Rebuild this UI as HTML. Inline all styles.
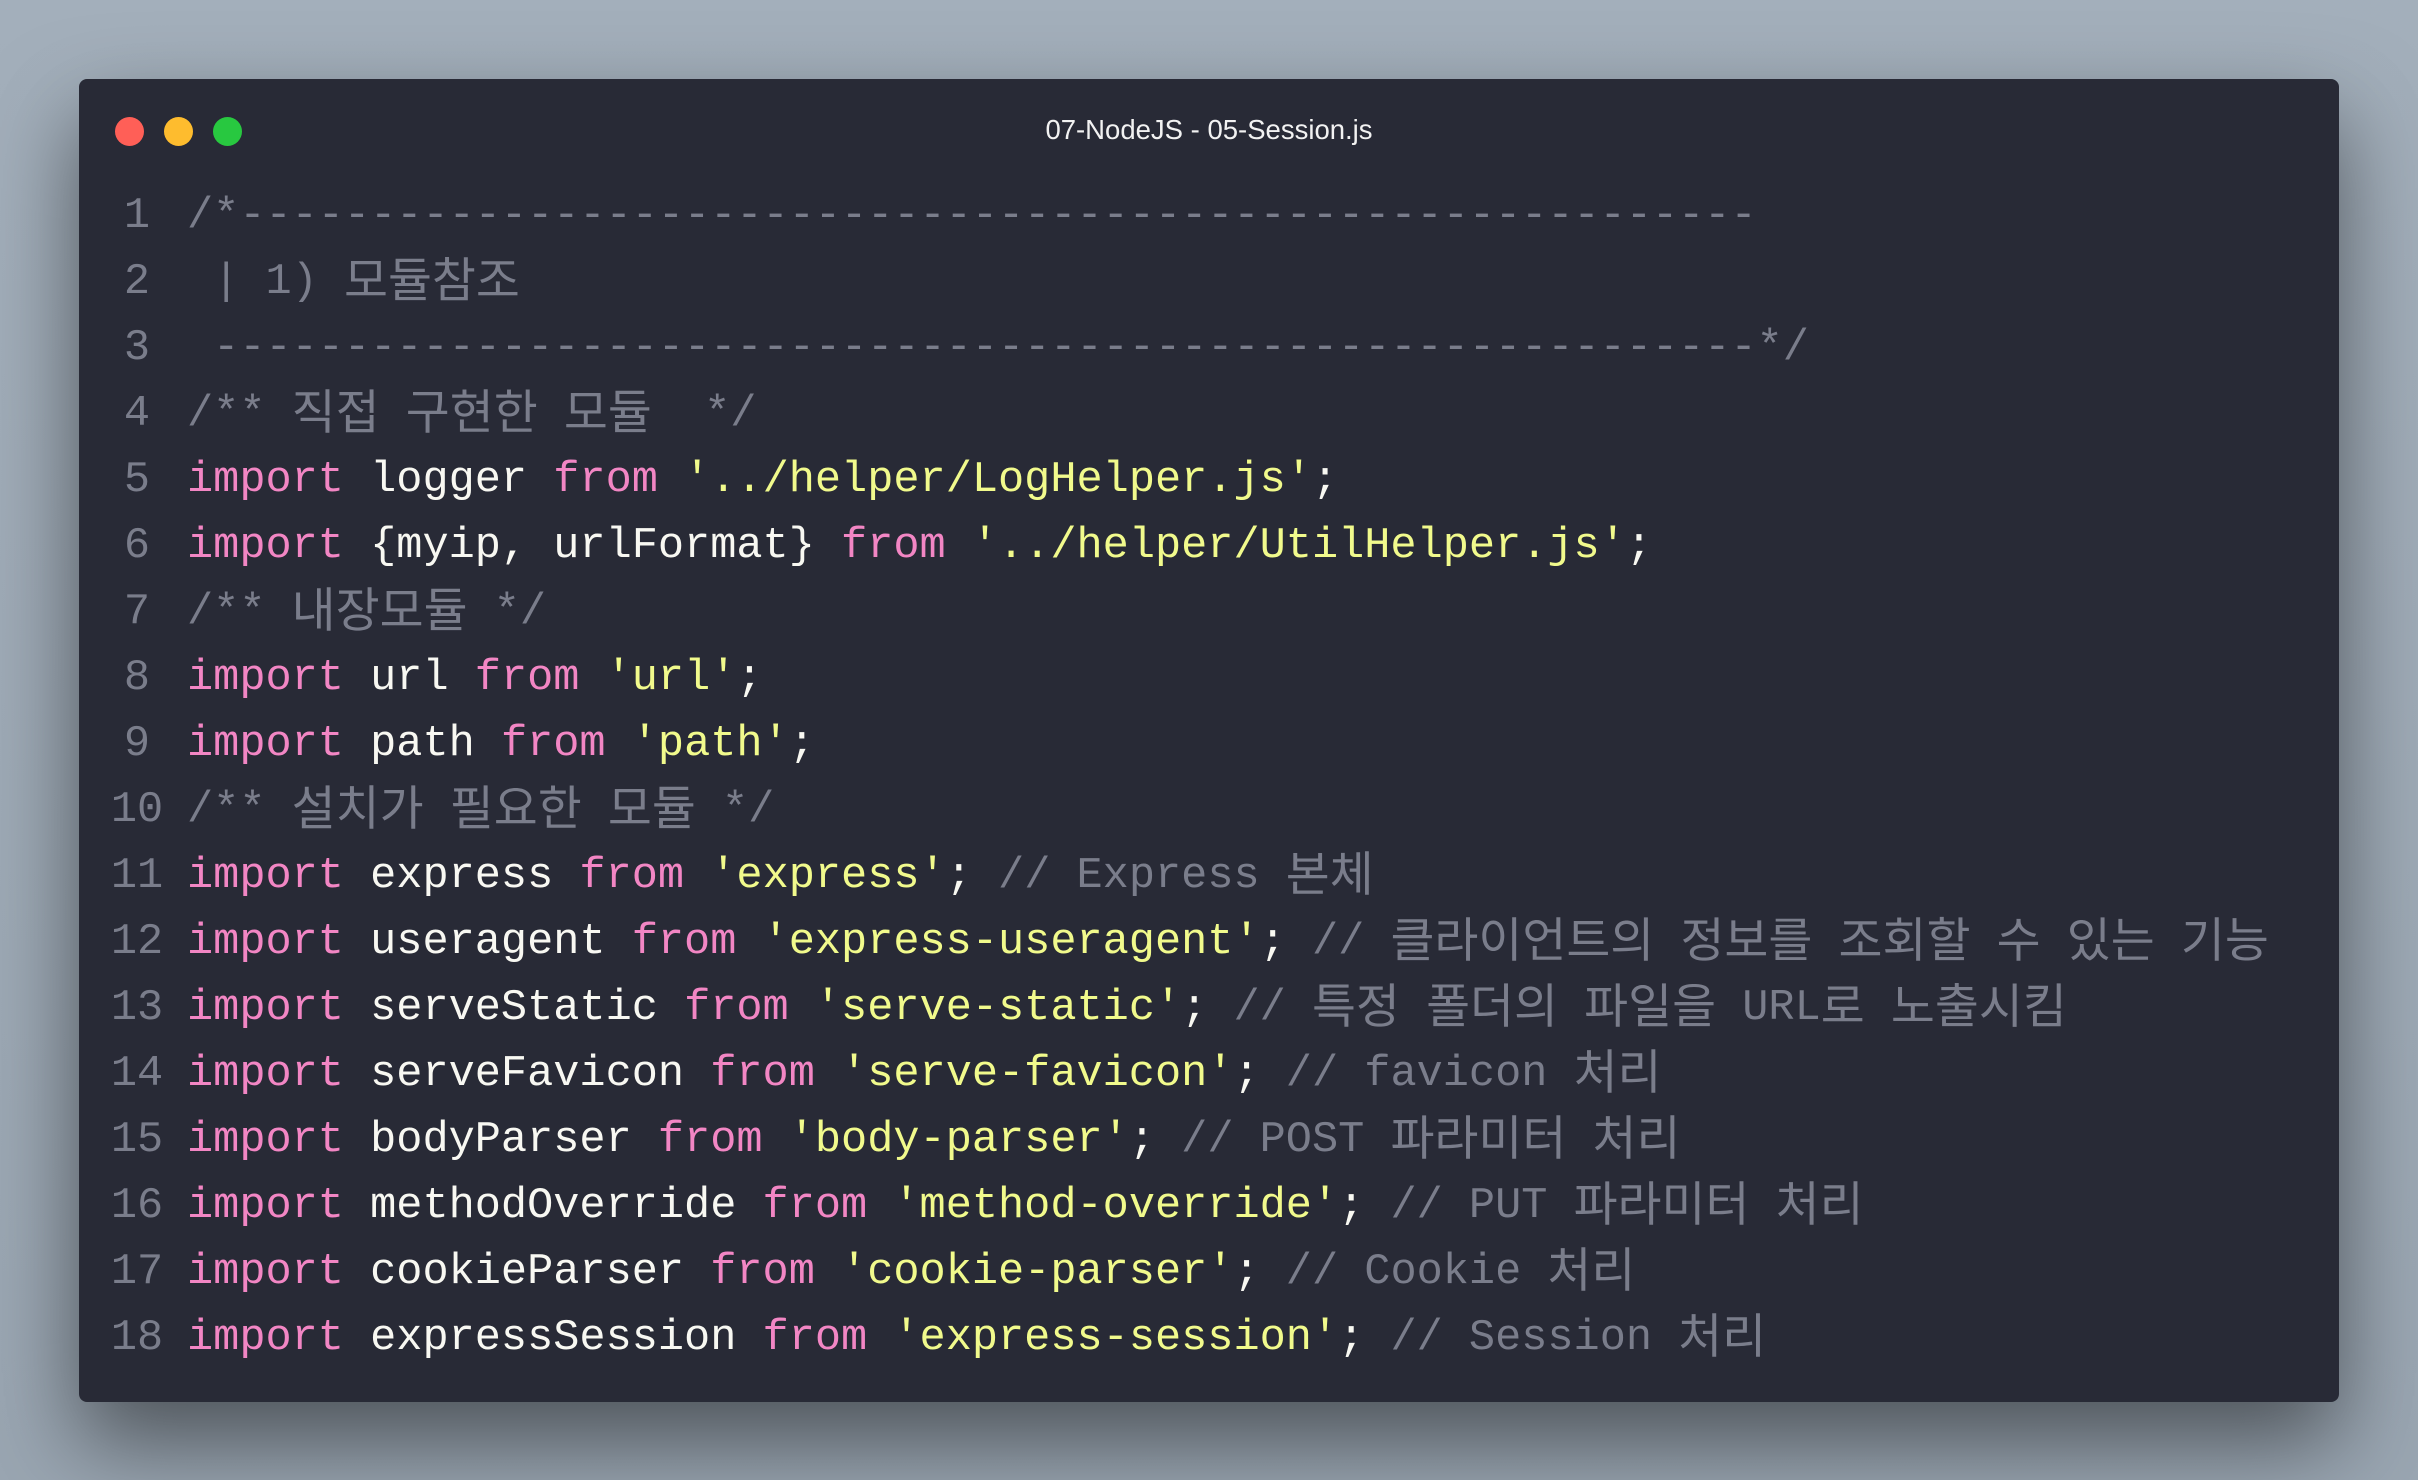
<!DOCTYPE html>
<html><head><meta charset="utf-8"><style>
html,body{margin:0;padding:0}
body{width:2418px;height:1480px;background:linear-gradient(180deg,#a3afbb,#9aa6b2);position:relative;overflow:hidden}
.win{position:absolute;left:79px;top:79px;width:2260px;height:1323px;background:#282a36;border-radius:8px;box-shadow:0 40px 90px rgba(0,0,0,.5)}
.dot{position:absolute;top:117px;width:29px;height:29px;border-radius:50%}
.title{position:absolute;left:0;width:2418px;top:114px;text-align:center;color:#f2f2f2;font:27.5px "Liberation Sans",sans-serif}
.code{position:absolute;left:0;top:184px;font:43.6px/66px "Liberation Mono","Noto Sans CJK KR",monospace;white-space:pre;color:#f8f8f2}
.code>div{height:66px}
.ln{display:inline-block;width:274px;text-align:center;color:#7a7d8b;margin-right:-87px}
.k{color:#f286c4}.s{color:#f1fa8c}.c{color:#7a7d8b}
.h{font-family:"Noto Sans CJK KR",sans-serif;font-size:47.8px;line-height:0;vertical-align:-4px}
</style></head><body>
<div class="win"></div>
<div class="dot" style="left:115px;background:#ff5f57"></div>
<div class="dot" style="left:164px;background:#febc2e"></div>
<div class="dot" style="left:213px;background:#28c840"></div>
<div class="title">07-NodeJS - 05-Session.js</div>
<div class="code"><div><span class="ln">1</span><span class="c">/*----------------------------------------------------------</span></div><div><span class="ln">2</span><span class="c"> | 1) <span class="h">모듈참조</span></span></div><div><span class="ln">3</span><span class="c"> -----------------------------------------------------------*/</span></div><div><span class="ln">4</span><span class="c">/** <span class="h">직접</span> <span class="h">구현한</span> <span class="h">모듈</span>  */</span></div><div><span class="ln">5</span><span class="k">import</span> logger <span class="k">from</span> <span class="s">'../helper/LogHelper.js'</span>;</div><div><span class="ln">6</span><span class="k">import</span> {myip, urlFormat} <span class="k">from</span> <span class="s">'../helper/UtilHelper.js'</span>;</div><div><span class="ln">7</span><span class="c">/** <span class="h">내장모듈</span> */</span></div><div><span class="ln">8</span><span class="k">import</span> url <span class="k">from</span> <span class="s">'url'</span>;</div><div><span class="ln">9</span><span class="k">import</span> path <span class="k">from</span> <span class="s">'path'</span>;</div><div><span class="ln">10</span><span class="c">/** <span class="h">설치가</span> <span class="h">필요한</span> <span class="h">모듈</span> */</span></div><div><span class="ln">11</span><span class="k">import</span> express <span class="k">from</span> <span class="s">'express'</span>; <span class="c">// Express <span class="h">본체</span></span></div><div><span class="ln">12</span><span class="k">import</span> useragent <span class="k">from</span> <span class="s">'express-useragent'</span>; <span class="c">// <span class="h">클라이언트의</span> <span class="h">정보를</span> <span class="h">조회할</span> <span class="h">수</span> <span class="h">있는</span> <span class="h">기능</span></span></div><div><span class="ln">13</span><span class="k">import</span> serveStatic <span class="k">from</span> <span class="s">'serve-static'</span>; <span class="c">// <span class="h">특정</span> <span class="h">폴더의</span> <span class="h">파일을</span> URL<span class="h">로</span> <span class="h">노출시킴</span></span></div><div><span class="ln">14</span><span class="k">import</span> serveFavicon <span class="k">from</span> <span class="s">'serve-favicon'</span>; <span class="c">// favicon <span class="h">처리</span></span></div><div><span class="ln">15</span><span class="k">import</span> bodyParser <span class="k">from</span> <span class="s">'body-parser'</span>; <span class="c">// POST <span class="h">파라미터</span> <span class="h">처리</span></span></div><div><span class="ln">16</span><span class="k">import</span> methodOverride <span class="k">from</span> <span class="s">'method-override'</span>; <span class="c">// PUT <span class="h">파라미터</span> <span class="h">처리</span></span></div><div><span class="ln">17</span><span class="k">import</span> cookieParser <span class="k">from</span> <span class="s">'cookie-parser'</span>; <span class="c">// Cookie <span class="h">처리</span></span></div><div><span class="ln">18</span><span class="k">import</span> expressSession <span class="k">from</span> <span class="s">'express-session'</span>; <span class="c">// Session <span class="h">처리</span></span></div></div>
</body></html>
